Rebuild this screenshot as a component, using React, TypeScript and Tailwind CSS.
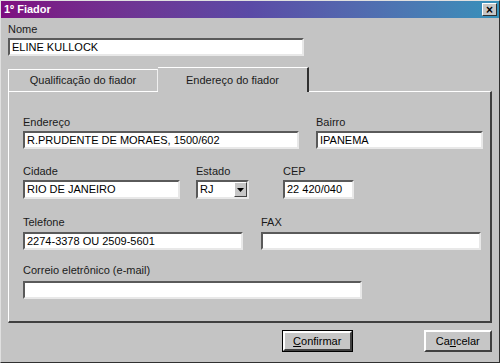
import React from 'react';

const Label: React.FC<{ text: string }> = ({ text }) => (
  <div className="h-[14px] leading-[14px] text-[11px] text-[#1a1a1a]">{text}</div>
);

const Field: React.FC<{ value?: string; className?: string }> = ({ value = '', className = '' }) => (
  <div
    className={`h-[18px] bg-white border-2 border-t-[#5a5a5a] border-l-[#5a5a5a] border-b-[#e8e8e8] border-r-[#e8e8e8] pl-[2px] text-[11px] leading-[14px] text-black whitespace-nowrap overflow-hidden ${className}`}
  >
    {value}
  </div>
);

const Button: React.FC<{ children: React.ReactNode; primary?: boolean; className?: string }> = ({
  children,
  primary,
  className = '',
}) => (
  <div className={`h-[22px] ${primary ? 'border border-black' : ''} ${className}`}>
    <div className="h-full border-2 border-t-white border-l-white border-b-[#404040] border-r-[#404040] bg-[#c6c6c6] flex items-center justify-center text-[11px] text-black">
      {children}
    </div>
  </div>
);

export default function App() {
  return (
    <div
      className="w-[500px] h-[363px] bg-[#c4c4c4] border-l border-t border-r border-b border-l-[#e0e0e0] border-t-[#e0e0e0] border-r-[#303030] border-b-[#303030] flex flex-col overflow-hidden"
      style={{ fontFamily: '"Liberation Sans", Arial, sans-serif' }}
    >
      {/* title bar */}
      <div className="h-[17px] bg-gradient-to-r from-[#7e0c80] via-[#5a4aa6] to-[#3591ba] flex items-center justify-between pl-[3px] pr-[2px]">
        <span className="text-white font-bold text-[11px] leading-none">1º Fiador</span>
        <div className="w-[15px] h-[13px] bg-[#c6c6c6] border border-t-white border-l-white border-b-[#303030] border-r-[#303030] flex items-center justify-center text-[12px] font-bold leading-none text-black">
          ×
        </div>
      </div>

      <div className="flex-1 px-[7px] flex flex-col">
        <div className="mt-[4px]">
          <Label text="Nome" />
        </div>
        <Field value="ELINE KULLOCK" className="mt-[2px] w-[296px]" />

        {/* tabs */}
        <div className="mt-[10px] flex items-end h-[25px]">
          <div className="w-[150px] h-[22px] border-l border-t border-r border-l-white border-t-white border-r-[#f0f0f0] flex items-center justify-center text-[11px] text-[#1a1a1a]">
            Qualificação do fiador
          </div>
          <div className="w-[151px] h-[25px] mb-[-1px] relative z-10 bg-[#c4c4c4] border-t border-r-2 border-t-white border-r-[#303030] flex items-start justify-center pt-[4px] text-[11px] text-[#1a1a1a]">
            Endereço do fiador
          </div>
          <div className="flex-1" />
        </div>

        {/* panel */}
        <div className="w-[484px] h-[232px] border-l border-t border-r-2 border-b-2 border-l-white border-t-white border-r-[#404040] border-b-[#404040] pl-[14px] pt-[23px]">
          <div className="flex">
            <div>
              <Label text="Endereço" />
              <Field value="R.PRUDENTE DE MORAES, 1500/602" className="mt-[2px] w-[276px]" />
            </div>
            <div className="ml-[17px]">
              <Label text="Bairro" />
              <Field value="IPANEMA" className="mt-[2px] w-[167px]" />
            </div>
          </div>

          <div className="flex mt-[15px]">
            <div>
              <Label text="Cidade" />
              <Field value="RIO DE JANEIRO" className="mt-[2px] w-[157px] h-[19px]" />
            </div>
            <div className="ml-[16px]">
              <Label text="Estado" />
              <div className="mt-[2px] w-[53px] h-[19px] bg-white border-2 border-t-[#5a5a5a] border-l-[#5a5a5a] border-b-[#e8e8e8] border-r-[#e8e8e8] flex items-stretch">
                <span className="flex-1 pl-[2px] text-[11px] leading-[15px] text-black">RJ</span>
                <div className="w-[13px] bg-[#c6c6c6] border border-t-white border-l-white border-b-[#404040] border-r-[#404040] flex items-center justify-center">
                  <svg width="7" height="4" viewBox="0 0 7 4">
                    <path d="M0 0h7L3.5 4z" fill="#000" />
                  </svg>
                </div>
              </div>
            </div>
            <div className="ml-[34px]">
              <Label text="CEP" />
              <Field value="22 420/040" className="mt-[2px] w-[71px] h-[19px]" />
            </div>
          </div>

          <div className="flex mt-[16px]">
            <div>
              <Label text="Telefone" />
              <Field value="2274-3378 OU 2509-5601" className="mt-[3px] w-[220px]" />
            </div>
            <div className="ml-[18px]">
              <Label text="FAX" />
              <Field className="mt-[3px] w-[220px]" />
            </div>
          </div>

          <div className="mt-[13px]">
            <Label text="Correio eletrônico (e-mail)" />
            <Field className="mt-[4px] w-[339px]" />
          </div>
        </div>

        {/* footer */}
        <div className="flex mt-[7px]">
          <Button primary className="ml-[274px] w-[71px]">
            <span>
              <span className="underline">C</span>onfirmar
            </span>
          </Button>
          <Button className="ml-[71px] w-[69px]">
            <span>
              Ca<span className="underline">n</span>celar
            </span>
          </Button>
        </div>
      </div>
    </div>
  );
}
